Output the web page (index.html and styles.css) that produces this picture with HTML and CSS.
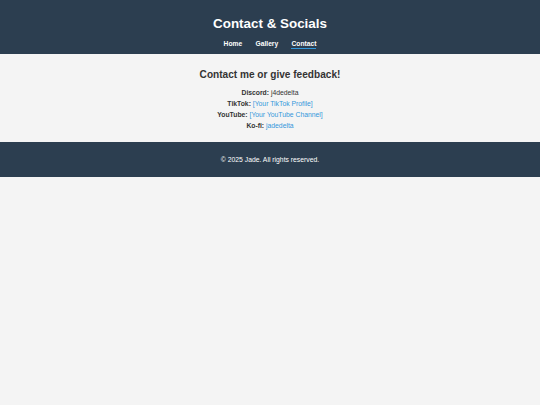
FILE: index.html
```html
<!DOCTYPE html>
<html lang="en">
<head>
<meta charset="utf-8">
<title>Contact &amp; Socials</title>
<link rel="stylesheet" href="styles.css">
</head>
<body>
<header class="site-header">
  <h1 class="site-title">Contact &amp; Socials</h1>
  <nav class="nav">
    <a class="nav-link" href="#">Home</a>
    <a class="nav-link" href="#">Gallery</a>
    <a class="nav-link active" href="#">Contact</a>
  </nav>
</header>
<main class="content">
  <h2 class="content-title">Contact me or give feedback!</h2>
  <ul class="contact-list">
    <li><strong>Discord:</strong> j4dedelta</li>
    <li><strong>TikTok:</strong> <a href="#">[Your TikTok Profile]</a></li>
    <li><strong>YouTube:</strong> <a href="#">[Your YouTube Channel]</a></li>
    <li><strong>Ko-fi:</strong> <a href="#">jadedelta</a></li>
  </ul>
</main>
<footer class="site-footer">
  <p class="footer-text">&copy; 2025 Jade. All rights reserved.</p>
</footer>
</body>
</html>
```

FILE: styles.css
```css
html, body {
  margin: 0;
  padding: 0;
}
body {
  background: #f4f4f4;
  color: #333;
  font-family: "Liberation Sans", Arial, sans-serif;
}
.site-header {
  background: #2c3e50;
  color: #fff;
  text-align: center;
  padding: 16px 0 5px;
}
.site-title {
  margin: 0;
  font-size: 13.4px;
  line-height: 16px;
  font-weight: bold;
}
.nav {
  margin-top: 8px;
  display: flex;
  justify-content: center;
  gap: 13.3px;
  font-size: 6.7px;
  line-height: 8px;
}
.nav-link {
  color: #fff;
  font-weight: bold;
  text-decoration: none;
}
.nav-link.active {
  border-bottom: 1px solid #3498db;
}
.content {
  text-align: center;
  padding: 15px 0 11.5px;
}
.content-title {
  margin: 0 0 5.5px;
  font-size: 10.1px;
  line-height: 12px;
  font-weight: bold;
}
.contact-list {
  list-style: none;
  margin: 0;
  padding: 0;
  font-size: 6.8px;
  line-height: 11px;
}
.contact-list a {
  color: #3498db;
  text-decoration: none;
}
.site-footer {
  background: #2c3e50;
  color: #fff;
  text-align: center;
  padding: 13px 0;
}
.footer-text {
  margin: 0;
  font-size: 6.8px;
  line-height: 9px;
}
```
